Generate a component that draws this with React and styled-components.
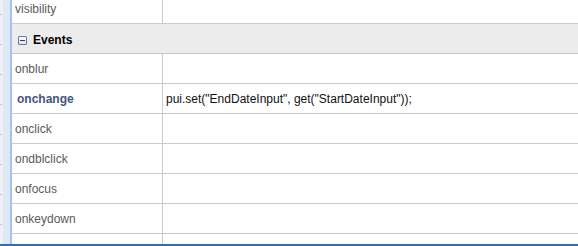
import React from "react";
import styled, { createGlobalStyle } from "styled-components";

const Global = createGlobalStyle`
  html, body { margin: 0; padding: 0; background: #fff; overflow: hidden; }
  body { font-family: "Liberation Sans", Arial, sans-serif; }
`;

const Frame = styled.div`
  width: 578px;
  height: 246px;
  display: flex;
  flex-direction: column;
  overflow: hidden;
`;

const Body = styled.div`
  flex: 0 0 244px;
  display: flex;
  overflow: hidden;
`;

const Gutter = styled.div`
  flex: 0 0 10px;
  border-right: 2px solid #a6c3ea;
  background:
    repeating-linear-gradient(to bottom, transparent 0 14px, #c4c4c4 14px 15px, transparent 15px 30px) 0 0 / 2px 100% no-repeat,
    linear-gradient(to right, #eef0f3 0 3px, #dde8f8 3px 10px);
`;

const Sheet = styled.div`
  flex: 1;
  margin-top: -6px;
  display: flex;
  flex-direction: column;
`;

const Row = styled.div`
  flex: 0 0 auto;
  display: grid;
  grid-template-columns: 151px 1fr;
  height: 29px;
  border-bottom: 1px solid #cbcbcb;
  background: #fff;
  font-size: 12px;
`;

const Name = styled.div`
  display: flex;
  align-items: center;
  border-right: 1px solid #cbcbcb;
  padding-left: ${p => (p.$bold ? "5px" : "3px")};
  color: ${p => (p.$bold ? "#44557a" : "#5a5a5a")};
  font-weight: ${p => (p.$bold ? "bold" : "normal")};
  white-space: nowrap;
`;

const Value = styled.div`
  display: flex;
  align-items: center;
  padding-left: 3px;
  color: #111;
  white-space: nowrap;
`;

const Group = styled.div`
  flex: 0 0 auto;
  box-sizing: border-box;
  height: 30px;
  display: flex;
  align-items: center;
  gap: 6px;
  padding: 3px 0 0 6px;
  background: #ececec;
  border-bottom: 1px solid #c6c6c6;
  font-size: 12px;
  font-weight: bold;
  color: #000;
`;

const Toggle = styled.span`
  width: 7px;
  height: 7px;
  border: 1px solid #6a7a98;
  border-radius: 1px;
  background: linear-gradient(#fff, #dfe4ec);
  position: relative;
  &::after {
    content: "";
    position: absolute;
    left: 1px;
    right: 1px;
    top: 3px;
    height: 1px;
    background: #2c3c5c;
  }
`;

const Footer = styled.div`
  flex: 0 0 2px;
  background: #2f6db5;
`;

const events = [
  ["onblur", ""],
  ["onchange", 'pui.set("EndDateInput", get("StartDateInput"));', true],
  ["onclick", ""],
  ["ondblclick", ""],
  ["onfocus", ""],
  ["onkeydown", ""],
  ["onkeypress", ""],
];

export default function App() {
  return (
    <Frame>
      <Global />
      <Body>
        <Gutter />
        <Sheet>
          <Row>
            <Name>visibility</Name>
            <Value />
          </Row>
          <Group>
            <Toggle />
            Events
          </Group>
          {events.map(([n, v, b]) => (
            <Row key={n}>
              <Name $bold={b}>{n}</Name>
              <Value>{v}</Value>
            </Row>
          ))}
        </Sheet>
      </Body>
      <Footer />
    </Frame>
  );
}
